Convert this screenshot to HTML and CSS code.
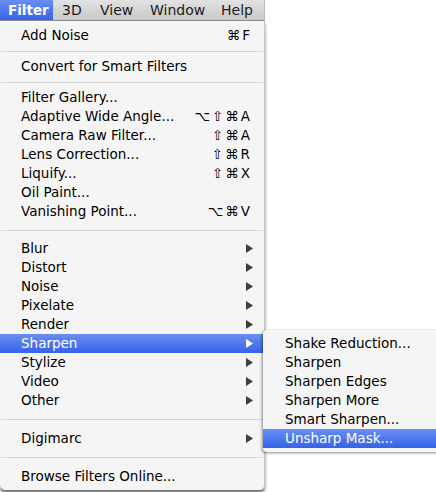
FILE: index.html
```html
<!DOCTYPE html>
<html>
<head>
<meta charset="utf-8">
<link rel="stylesheet" href="styles.css">
</head>
<body>
<div class="screen">
  <div class="menubar">
    <div class="bar-item active">Filter</div>
    <div class="bar-item w-3d">3D</div>
    <div class="bar-item w-view">View</div>
    <div class="bar-item w-window">Window</div>
    <div class="bar-item">Help</div>
  </div>
  <div class="menu">
    <div class="row"><span>Add Noise</span><span class="key">⌘F</span></div>
    <div class="sep"></div>
    <div class="row"><span>Convert for Smart Filters</span></div>
    <div class="sep"></div>
    <div class="row"><span>Filter Gallery...</span></div>
    <div class="row"><span>Adaptive Wide Angle...</span><span class="key">⌥⇧⌘A</span></div>
    <div class="row"><span>Camera Raw Filter...</span><span class="key">⇧⌘A</span></div>
    <div class="row"><span>Lens Correction...</span><span class="key">⇧⌘R</span></div>
    <div class="row"><span>Liquify...</span><span class="key">⇧⌘X</span></div>
    <div class="row"><span>Oil Paint...</span></div>
    <div class="row"><span>Vanishing Point...</span><span class="key">⌥⌘V</span></div>
    <div class="sep sep-lg"></div>
    <div class="row sub"><span>Blur</span><svg class="arrow" viewBox="0 0 7 9"><polygon points="0,0 7,4.5 0,9"/></svg></div>
    <div class="row sub"><span>Distort</span><svg class="arrow" viewBox="0 0 7 9"><polygon points="0,0 7,4.5 0,9"/></svg></div>
    <div class="row sub"><span>Noise</span><svg class="arrow" viewBox="0 0 7 9"><polygon points="0,0 7,4.5 0,9"/></svg></div>
    <div class="row sub"><span>Pixelate</span><svg class="arrow" viewBox="0 0 7 9"><polygon points="0,0 7,4.5 0,9"/></svg></div>
    <div class="row sub"><span>Render</span><svg class="arrow" viewBox="0 0 7 9"><polygon points="0,0 7,4.5 0,9"/></svg></div>
    <div class="row sub hl"><span>Sharpen</span><svg class="arrow" viewBox="0 0 7 9"><polygon points="0,0 7,4.5 0,9"/></svg></div>
    <div class="row sub"><span>Stylize</span><svg class="arrow" viewBox="0 0 7 9"><polygon points="0,0 7,4.5 0,9"/></svg></div>
    <div class="row sub"><span>Video</span><svg class="arrow" viewBox="0 0 7 9"><polygon points="0,0 7,4.5 0,9"/></svg></div>
    <div class="row sub"><span>Other</span><svg class="arrow" viewBox="0 0 7 9"><polygon points="0,0 7,4.5 0,9"/></svg></div>
    <div class="sep sep-xl"></div>
    <div class="row sub"><span>Digimarc</span><svg class="arrow" viewBox="0 0 7 9"><polygon points="0,0 7,4.5 0,9"/></svg></div>
    <div class="sep sep-xl"></div>
    <div class="row"><span>Browse Filters Online...</span></div>
  </div>
  <div class="submenu">
    <div class="srow">Shake Reduction...</div>
    <div class="srow">Sharpen</div>
    <div class="srow">Sharpen Edges</div>
    <div class="srow">Sharpen More</div>
    <div class="srow">Smart Sharpen...</div>
    <div class="srow hl">Unsharp Mask...</div>
  </div>
</div>
</body>
</html>
```

FILE: styles.css
```css
html, body {
  margin: 0;
  padding: 0;
  background: #ffffff;
}

.screen {
  position: relative;
  width: 436px;
  height: 492px;
  overflow: hidden;
  font-family: "DejaVu Sans", "Liberation Sans", sans-serif;
  font-size: 13.5px;
  color: #000;
}

.menubar {
  display: flex;
  align-items: stretch;
  width: 264px;
  height: 20px;
  background: linear-gradient(#e2e2e2, #c9c9c9);
  border-bottom: 1px solid #8c8c8c;
  border-right: 1px solid #b8b8b8;
}

.bar-item {
  display: flex;
  align-items: center;
  box-sizing: border-box;
  padding: 0 0 0 9px;
  font-size: 14px;
  color: #1c1c1c;
}

.w-3d { width: 38px; }
.w-view { width: 50px; }
.w-window { width: 71px; }

.bar-item.active {
  width: 53px;
  padding: 0 0 0 8px;
  font-size: 13.5px;
  font-weight: bold;
  color: #fff;
  background: linear-gradient(#6a8ef4, #3563e8);
}

.menu {
  width: 264px;
  padding: 5px 0 4px;
  background: #f5f5f5;
  border-right: 1px solid #c8c8c8;
  border-radius: 0 0 5px 5px;
  box-shadow: 0 3px 3px rgba(0, 0, 0, 0.55);
}

.row {
  display: flex;
  align-items: center;
  justify-content: space-between;
  height: 19px;
  padding: 0 14px 0 21px;
  line-height: 19px;
}

.row.sub {
  padding-right: 11px;
}

.key {
  letter-spacing: 2px;
  margin-right: -2px;
}

.arrow {
  width: 7px;
  height: 9px;
  fill: #3e3e3e;
}

.hl {
  color: #fff;
  background: linear-gradient(#6a8ef4, #3563e8);
}

.hl .arrow {
  fill: #fff;
}

.sep {
  height: 12px;
  display: flex;
  align-items: center;
}

.sep::before {
  content: "";
  flex: 1;
  height: 1px;
  margin: 0 1px;
  background: #d8d8d8;
}

.sep-lg { height: 18px; }
.sep-xl { height: 19px; }

.submenu {
  position: absolute;
  left: 263px;
  top: 330px;
  width: 190px;
  padding: 4px 0;
  background: #f5f5f5;
  border-radius: 4px 0 0 4px;
  box-shadow: -1px 1px 3px rgba(0, 0, 0, 0.45);
}

.srow {
  height: 19px;
  line-height: 19px;
  padding-left: 22px;
}
```
